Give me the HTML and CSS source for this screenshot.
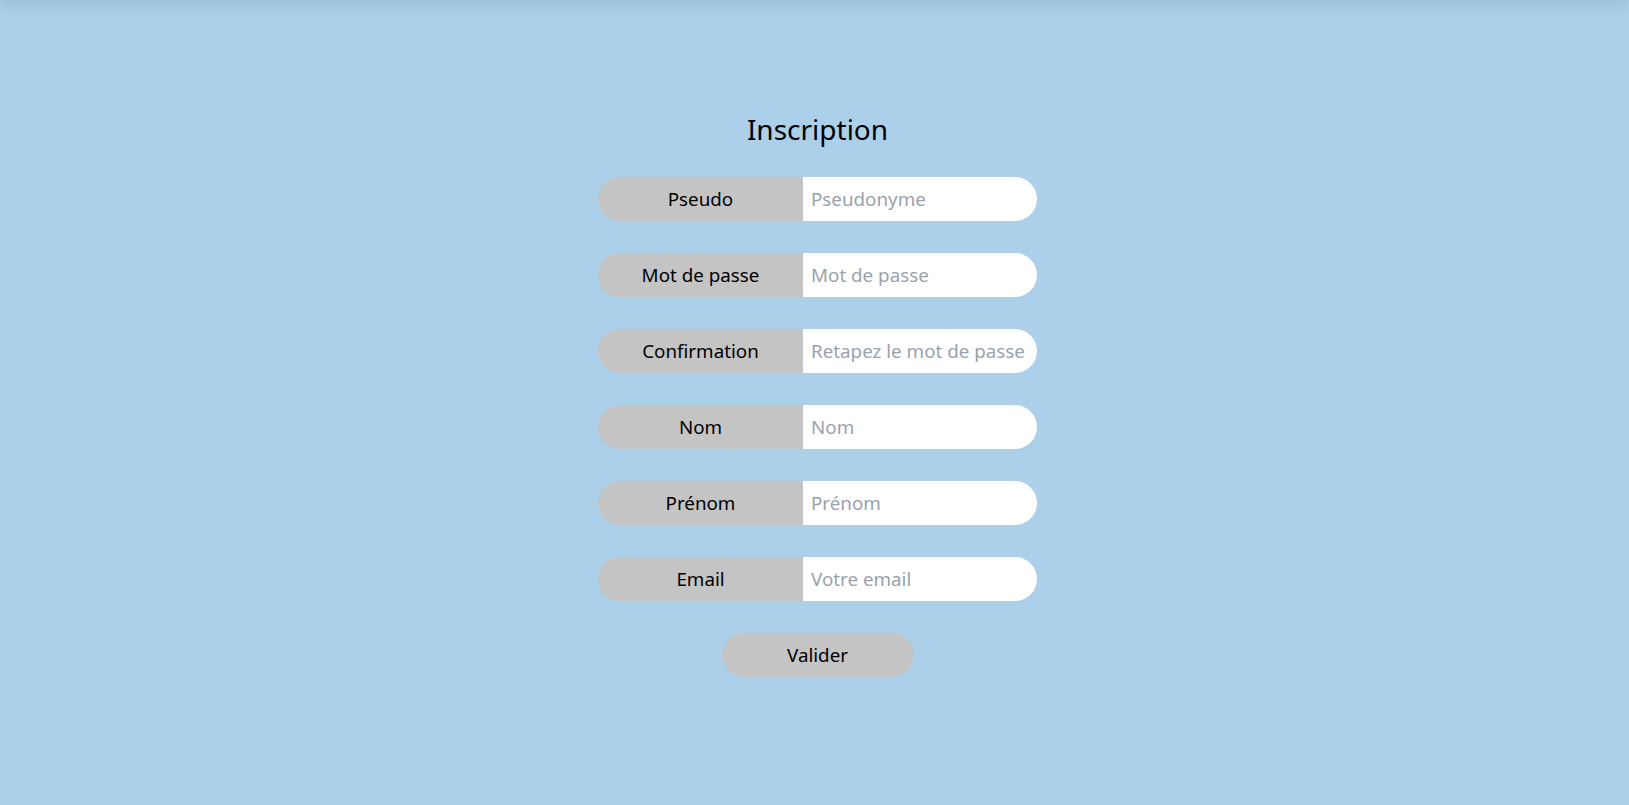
FILE: index.html
```html
<!DOCTYPE html>
<html lang="fr">
<head>
<meta charset="utf-8">
<title>Inscription</title>
<link rel="stylesheet" href="styles.css">
</head>
<body>
<header class="topbar"></header>
<main class="page">
  <h1 class="title">Inscription</h1>
  <form class="form">
    <div class="field"><label class="label">Pseudo</label><input class="input" type="text" placeholder="Pseudonyme"></div>
    <div class="field"><label class="label">Mot de passe</label><input class="input" type="password" placeholder="Mot de passe"></div>
    <div class="field"><label class="label">Confirmation</label><input class="input" type="password" placeholder="Retapez le mot de passe"></div>
    <div class="field"><label class="label">Nom</label><input class="input" type="text" placeholder="Nom"></div>
    <div class="field"><label class="label">Prénom</label><input class="input" type="text" placeholder="Prénom"></div>
    <div class="field"><label class="label">Email</label><input class="input" type="email" placeholder="Votre email"></div>
    <button class="submit" type="button">Valider</button>
  </form>
</main>
</body>
</html>
```
FILE: styles.css
```css
html, body {
  margin: 0;
  padding: 0;
  height: 100%;
}
body {
  background: #acd0ea;
  font-family: "Noto Sans", "Open Sans", sans-serif;
  color: #000;
  overflow: hidden;
}
.topbar {
  position: fixed;
  top: 0;
  left: 0;
  right: 0;
  height: 0;
  box-shadow: 0 0 14px 2px rgba(40, 70, 100, 0.35);
}
.page {
  display: flex;
  flex-direction: column;
  align-items: center;
  padding-top: 107px;
  padding-left: 6px;
}
.title {
  margin: 0 0 26px 0;
  font-size: 28px;
  font-weight: 400;
  line-height: 44px;
}
.form {
  display: flex;
  flex-direction: column;
  align-items: center;
  gap: 32px;
}
.field {
  display: flex;
  width: 439px;
  height: 44px;
  border-radius: 22px;
  overflow: hidden;
}
.label {
  width: 205px;
  flex: none;
  background: #c4c4c4;
  display: flex;
  align-items: center;
  justify-content: center;
  font-size: 18.8px;
}
.input {
  flex: 1;
  min-width: 0;
  border: none;
  outline: none;
  background: #fff;
  padding: 0 0 0 8px;
  font-family: inherit;
  font-size: 18.8px;
  color: #000;
}
.input::placeholder {
  color: #9aa2ad;
}
.submit {
  width: 192px;
  height: 44px;
  border: none;
  border-radius: 22px;
  background: #c4c4c4;
  font-family: inherit;
  font-size: 18.8px;
  color: #000;
  padding: 0;
}
```
